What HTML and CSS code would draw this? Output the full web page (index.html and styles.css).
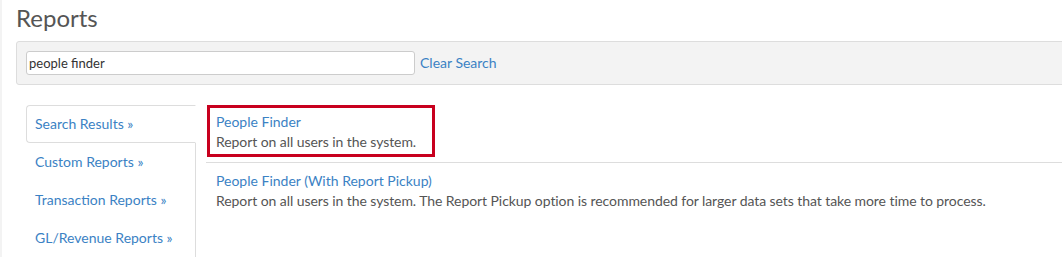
FILE: index.html
```html
<!DOCTYPE html>
<html>
<head>
<meta charset="utf-8">
<link rel="stylesheet" href="styles.css">
</head>
<body>
<div class="page">
  <h1 class="title">Reports</h1>
  <div class="search-panel">
    <input class="search-input" type="text" value="people finder">
    <a class="clear-link" href="#">Clear Search</a>
  </div>
  <div class="reports">
    <ul class="nav">
      <li class="nav-item active"><a href="#">Search Results »</a></li>
      <li class="nav-item"><a href="#">Custom Reports »</a></li>
      <li class="nav-item"><a href="#">Transaction Reports »</a></li>
      <li class="nav-item"><a href="#">GL/Revenue Reports »</a></li>
    </ul>
    <div class="results">
      <div class="result first">
        <div class="highlight">
          <a class="result-link" href="#">People Finder</a>
          <div class="result-desc">Report on all users in the system.</div>
        </div>
      </div>
      <div class="result">
        <a class="result-link" href="#">People Finder (With Report Pickup)</a>
        <div class="result-desc">Report on all users in the system. The Report Pickup option is recommended for larger data sets that take more time to process.</div>
      </div>
    </div>
  </div>
</div>
</body>
</html>
```

FILE: styles.css
```css
html, body {
  margin: 0;
  padding: 0;
  background: #fff;
  overflow: hidden;
}
body {
  font-family: Lato, "Open Sans", sans-serif;
  font-size: 14px;
  line-height: 20px;
  color: #555;
}
.page {
  border-left: 2px solid #f3f3f3;
  padding-left: 14px;
  height: 257px;
  box-sizing: border-box;
}
.title {
  margin: 0 0 6px 0;
  padding-top: 1px;
  font-size: 24px;
  line-height: 34px;
  font-weight: 400;
  color: #555;
}
.search-panel {
  display: flex;
  align-items: center;
  height: 44px;
  box-sizing: border-box;
  margin-right: -20px;
  padding-left: 9px;
  background: #f3f3f3;
  border: 1px solid #ddd;
  border-radius: 3px 0 0 3px;
}
.search-input {
  width: 389px;
  height: 24px;
  box-sizing: border-box;
  padding: 0 2px;
  margin: 0 5px 0 0;
  border: 1px solid #ccc;
  border-radius: 3px;
  background: #fff;
  font-family: Lato, sans-serif;
  font-size: 13px;
  color: #333;
  outline: none;
}
.clear-link {
  color: #3b82c4;
  text-decoration: none;
  font-size: 14px;
}
.reports {
  display: flex;
  gap: 10px;
  margin-top: 20px;
  margin-left: 10px;
}
.nav {
  list-style: none;
  margin: 0;
  padding: 0;
  width: 170px;
  flex: none;
  box-sizing: border-box;
  border-right: 1px solid #ddd;
}
.nav-item a {
  display: block;
  padding: 8px 8px;
  line-height: 20px;
  border: 1px solid transparent;
  border-radius: 4px 0 0 4px;
  color: #3b82c4;
  text-decoration: none;
  white-space: nowrap;
}
.nav-item.active a {
  border-color: #ddd;
  border-right-color: #fff;
  background: #fff;
  margin-right: -1px;
}
.results {
  flex: 1;
  margin-right: -20px;
}
.result {
  padding: 8px 10px 0 10px;
}
.result.first {
  padding: 0 0 5px 1px;
  border-bottom: 1px solid #ddd;
}
.highlight {
  display: inline-block;
  border: 3px solid #c8001e;
  padding: 4px 16px 2px 6px;
}
.result-link {
  color: #3b82c4;
  text-decoration: none;
}
.result-desc {
  color: #555;
  letter-spacing: -0.07px;
}
```
